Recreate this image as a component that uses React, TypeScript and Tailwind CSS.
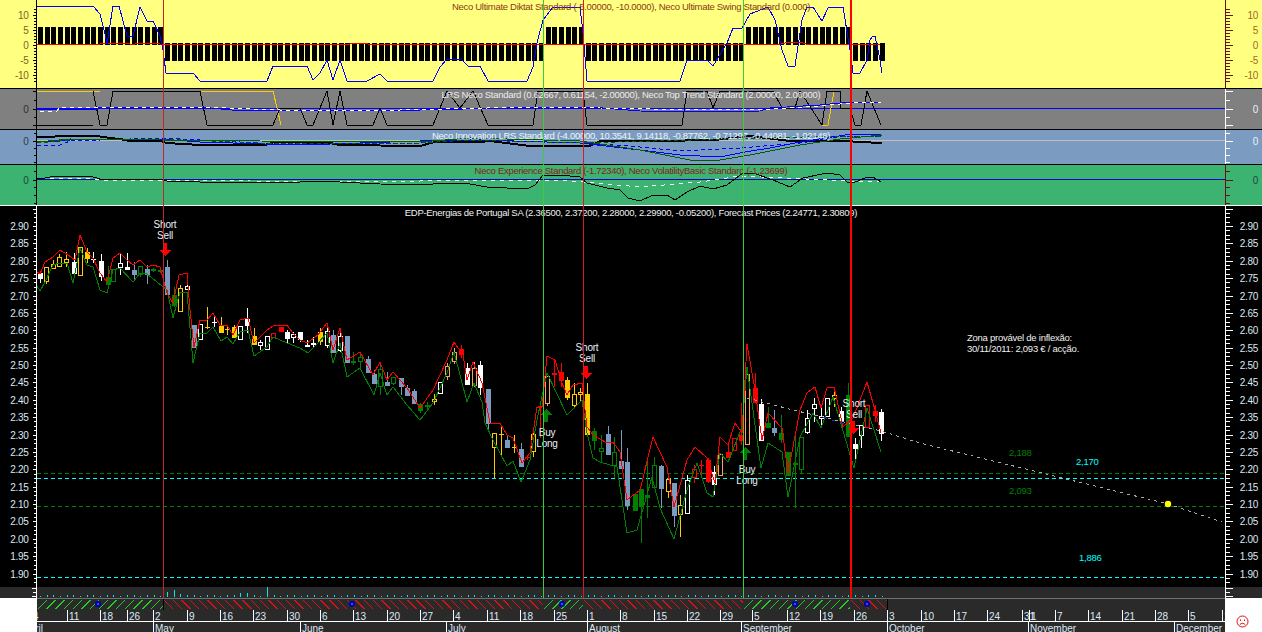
import type { ReactNode } from "react";

type Candle = [number, number, number, number, number, string, number?];
type Tick = { y: number; label?: string; major?: boolean };

const RED = "#ff0000";
const GREEN = "#008000";
const STEEL = "#7b9cc0";
const GOLD = "#ffcc00";
const PEACH = "#f4a460";
const WHITE = "#ffffff";

// x, wick top, body top, body bottom, wick bottom, colour, hollow
const CANDLES: Candle[] = [
  [40, 272, 273, 279, 283, WHITE], [46, 267, 267, 281, 284, GOLD, 1], [53, 260, 264, 268, 269, GOLD, 1],
  [59, 254, 257, 266, 267, GOLD, 1], [66, 252, 259, 262, 267, GOLD, 1], [74, 253, 262, 274, 275, WHITE],
  [80, 247, 247, 275, 275, GOLD, 1], [87, 248, 252, 259, 263, GOLD], [93, 252, 259, 260, 263, WHITE],
  [101, 254, 261, 277, 281, WHITE], [108, 266, 277, 285, 285, GREEN], [113, 269, 269, 281, 281, GREEN, 1],
  [120, 253, 263, 267, 275, WHITE, 1], [127, 253, 267, 270, 270, WHITE], [134, 262, 270, 275, 280, STEEL],
  [140, 266, 266, 274, 277, GREEN, 1], [147, 265, 269, 275, 284, STEEL], [153, 268, 269, 271, 272, GREEN],
  [160, 269, 270, 272, 273, GREEN], [167, 260, 267, 295, 295, STEEL], [174, 287, 295, 306, 307, GREEN],
  [180, 285, 288, 311, 311, GOLD, 1], [187, 282, 286, 289, 289, WHITE, 1], [194, 325, 325, 348, 348, STEEL],
  [200, 324, 324, 339, 340, WHITE, 1], [207, 307, 327, 328, 329, GOLD], [214, 315, 322, 323, 327, WHITE],
  [221, 317, 326, 333, 333, GOLD], [227, 325, 329, 330, 335, GOLD], [234, 325, 327, 338, 338, GOLD],
  [240, 326, 326, 339, 339, WHITE, 1], [247, 308, 319, 326, 333, WHITE], [254, 328, 336, 345, 345, GOLD],
  [260, 340, 342, 345, 350, WHITE, 1], [267, 336, 336, 349, 349, WHITE, 1], [273, 333, 333, 337, 337, RED, 1],
  [281, 327, 327, 332, 332, RED], [287, 330, 332, 339, 344, WHITE], [293, 332, 334, 337, 343, WHITE, 1],
  [300, 332, 332, 340, 342, WHITE], [307, 340, 345, 347, 347, WHITE], [313, 337, 343, 344, 348, WHITE, 1],
  [320, 328, 332, 342, 345, GOLD], [327, 323, 331, 345, 348, WHITE, 1], [333, 330, 335, 353, 353, STEEL],
  [340, 328, 336, 350, 352, WHITE, 1], [347, 336, 336, 363, 363, STEEL], [353, 352, 361, 363, 365, GREEN],
  [360, 352, 357, 361, 370, GREEN, 1], [368, 356, 359, 373, 373, STEEL], [374, 370, 374, 384, 384, STEEL],
  [380, 362, 369, 386, 395, GREEN, 1], [387, 372, 382, 386, 386, STEEL], [393, 377, 377, 383, 385, GREEN, 1],
  [401, 378, 378, 387, 395, STEEL], [407, 385, 388, 396, 396, STEEL], [414, 389, 391, 404, 404, STEEL],
  [420, 403, 404, 411, 413, GREEN], [427, 402, 405, 407, 410, GREEN], [434, 394, 399, 401, 405, GOLD, 1],
  [440, 382, 382, 393, 393, WHITE, 1], [447, 363, 366, 376, 380, PEACH, 1], [454, 348, 352, 361, 364, PEACH, 1],
  [461, 345, 349, 355, 358, RED], [467, 363, 368, 385, 385, WHITE], [474, 362, 368, 385, 387, PEACH, 1],
  [480, 361, 365, 388, 395, WHITE], [488, 389, 389, 424, 432, STEEL], [494, 433, 433, 447, 478, GOLD, 1],
  [501, 426, 434, 435, 457, GOLD], [507, 435, 440, 448, 448, STEEL], [514, 435, 447, 448, 453, GOLD],
  [521, 443, 449, 467, 467, STEEL], [527, 455, 457, 458, 460, RED], [533, 433, 434, 451, 457, GOLD, 1],
  [540, 405, 406, 407, 438, RED], [547, 376, 376, 403, 406, PEACH, 1], [554, 360, 373, 375, 387, RED],
  [561, 363, 372, 381, 387, RED], [567, 377, 380, 398, 400, GOLD], [574, 383, 394, 405, 408, GOLD, 1],
  [580, 388, 392, 394, 402, GOLD, 1], [587, 383, 394, 435, 435, GOLD], [594, 428, 431, 441, 450, GREEN],
  [601, 435, 448, 451, 462, GREEN, 1], [608, 426, 434, 455, 455, STEEL], [614, 437, 452, 465, 478, GREEN, 1],
  [621, 430, 461, 469, 469, STEEL], [627, 448, 462, 506, 510, STEEL], [635, 494, 494, 511, 511, GREEN],
  [641, 489, 489, 506, 543, GREEN], [647, 457, 495, 498, 518, GREEN], [654, 457, 465, 487, 487, GREEN, 1],
  [661, 465, 466, 489, 508, STEEL], [668, 475, 479, 491, 498, GOLD, 1], [674, 483, 483, 516, 527, STEEL],
  [680, 495, 505, 514, 537, GOLD, 1], [687, 475, 480, 513, 513, WHITE, 1], [694, 465, 469, 477, 483, RED, 1],
  [701, 460, 465, 466, 477, RED], [708, 458, 460, 482, 483, RED], [714, 466, 472, 485, 495, WHITE],
  [720, 454, 454, 475, 475, PEACH, 1], [728, 442, 452, 458, 458, RED], [734, 438, 438, 450, 450, RED, 1],
  [741, 403, 435, 441, 445, RED], [747, 374, 374, 444, 444, PEACH, 1], [755, 373, 388, 403, 403, RED],
  [761, 399, 404, 441, 441, WHITE], [768, 407, 423, 428, 428, GREEN], [774, 410, 428, 433, 436, STEEL],
  [781, 415, 433, 440, 443, GREEN], [788, 452, 452, 476, 476, GREEN], [795, 433, 463, 465, 508, GREEN],
  [801, 437, 437, 469, 473, GREEN, 1], [807, 410, 418, 432, 434, WHITE, 1], [814, 398, 404, 408, 422, WHITE, 1],
  [821, 408, 416, 418, 427, WHITE, 1], [827, 398, 398, 416, 416, WHITE, 1], [834, 390, 395, 398, 407, GOLD, 1],
  [841, 407, 411, 421, 427, WHITE], [848, 383, 395, 437, 437, GREEN], [855, 438, 444, 449, 463, WHITE],
  [861, 425, 425, 435, 448, WHITE, 1], [867, 405, 405, 427, 427, RED, 1], [875, 405, 411, 416, 422, RED],
  [881, 409, 412, 434, 441, WHITE],
];

const UPPER_BAND =
  "37,272 40,274 45,262 53,257 60,250 68,255 75,260 80,235 87,252 93,258 100,273 107,282 113,258 120,253 127,260 133,265 140,260 147,267 153,265 160,267 167,293 173,303 179,275 187,273 190,310 194,347 200,320 207,320 213,313 220,325 227,325 233,335 240,320 248,318 254,343 267,330 273,326 287,325 293,333 300,340 307,343 318,335 327,323 333,350 340,328 347,360 360,352 373,375 380,362 387,380 393,372 407,388 420,408 433,390 447,360 454,342 463,355 467,380 473,362 482,383 490,423 500,423 507,435 513,438 522,463 530,453 537,407 542,407 547,356 555,360 562,383 567,395 573,385 582,383 587,427 593,435 607,443 613,442 620,452 627,500 640,490 653,437 667,467 674,507 687,460 695,447 707,458 715,483 720,437 728,445 735,423 742,433 747,344 755,390 762,440 768,413 782,428 788,473 800,410 807,393 815,387 821,408 827,388 834,387 843,427 853,418 867,382 875,410 881,433";
const LOWER_BAND =
  "37,286 40,291 45,282 53,265 60,263 67,263 73,283 80,248 87,265 93,267 100,290 107,293 113,270 120,268 133,282 140,273 147,274 167,290 173,318 180,292 187,292 193,363 200,333 207,333 213,327 221,341 227,337 233,344 240,332 248,330 254,356 267,347 273,337 287,343 300,348 308,353 318,343 327,333 333,363 340,343 347,377 360,368 374,395 380,373 387,395 393,387 407,405 420,420 433,403 447,373 454,352 467,402 474,383 482,402 485,423 493,440 507,466 513,461 521,482 530,460 537,420 547,373 567,415 582,400 587,433 593,458 600,462 617,467 627,533 637,530 652,477 660,508 674,539 687,490 697,463 707,493 713,497 720,453 728,462 742,427 747,367 761,468 768,443 782,452 788,497 800,437 813,413 821,428 833,397 854,468 867,408 881,452";

const DIKTAT_SWING =
  "37,6 93,6 100,14 105,34 107,44 113,6 119,6 127,36 133,36 140,7 147,21 153,21 160,36 163,50 166,73 193,73 200,81 267,81 273,66 307,66 313,80 320,73 327,60 333,80 340,60 347,81 367,81 380,74 387,81 433,81 440,67 447,59 461,59 468,66 480,66 488,81 527,81 533,67 537,43 543,20 553,7 580,7 583,33 587,81 680,81 687,60 707,60 713,66 727,43 733,28 742,28 750,14 768,7 775,20 782,50 788,66 795,66 802,20 807,7 813,7 822,21 828,8 843,7 850,50 853,73 860,73 867,60 870,40 873,36 875,36 880,60 882,73";
const TOP_TREND =
  "93,91 100,125 107,125 113,91 200,91 207,125 273,125 280,108 300,108 307,125 313,125 327,91 333,125 340,91 347,125 373,125 380,108 387,125 420,125 433,125 447,91 460,108 473,91 488,125 533,125 538,91 583,91 587,125 682,125 687,91 707,91 713,108 720,91 773,91 782,108 795,108 800,91 822,125 827,91 840,91 840,108 850,108 855,125 861,125 867,91 881,125";
const INNOVATION_THICK =
  "37,137 50,137 60,136 97,136 110,138 120,139 130,141 160,141 167,143 200,145 265,145 275,142 330,143 340,145 420,146 435,142 480,142 490,141 530,146 545,146 590,146 600,141 680,141 690,140 715,140 750,136 790,141 845,141 860,142 882,143";
const EXPERIENCE =
  "37,179 45,178 55,176 65,177 75,176 90,176 100,179 160,179 167,181 200,182 300,182 320,181 380,184 420,185 433,184 453,183 470,184 487,187 507,188 527,189 535,185 543,175 560,175 580,177 587,183 607,188 620,190 628,198 640,201 653,195 667,195 675,200 687,192 700,186 713,189 727,185 743,173 753,173 773,180 790,187 803,178 827,173 840,175 847,182 853,183 865,178 873,177 881,182";

const GRAY_TICKS: Tick[] = [{ y: 91, major: true }, { y: 100 }, { y: 108.5, label: "0", major: true }, { y: 117 }, { y: 125, major: true }];
const BLUE_TICKS: Tick[] = [{ y: 133 }, { y: 141, label: "0", major: true }, { y: 148 }, { y: 155 }, { y: 162 }];
const GREEN_TICKS: Tick[] = [{ y: 171 }, { y: 179.5, label: "0", major: true }, { y: 187 }, { y: 195 }, { y: 203 }];

function yellowTicks(): Tick[] {
  const ticks: Tick[] = [];
  const labels = ["10", "5", "0", "-5", "-10"];
  for (let i = -2; i < 23; i++) {
    const major = i >= 0 && i % 5 === 0 && i / 5 < 5;
    ticks.push({ y: 14.5 + i * 3, major, label: major ? labels[i / 5] : undefined });
  }
  return ticks;
}

function priceTicks(): Tick[] {
  const ticks: Tick[] = [];
  for (let i = -4; i <= 21; i++) {
    const y = 226 + i * 17.375;
    const value = 2.9 - i * 0.05;
    const inRange = i >= 0 && i <= 20;
    ticks.push({ y, major: true, label: inRange ? value.toFixed(2) : undefined });
    ticks.push({ y: y + 4.3 }, { y: y + 8.7 }, { y: y + 13 });
  }
  return ticks.filter((t) => t.y > 206 && t.y < 587);
}

function Axis({ side, top, height, line, label, ticks }: { side: "left" | "right"; top: number; height: number; line: string; label: string; ticks: Tick[] }) {
  const left = side === "left";
  const axisX = left ? 36.5 : 0.5;
  return (
    <svg width={37} height={height} viewBox={`0 ${top} 37 ${height}`} className="block text-[10px] tracking-[-0.3px]" shapeRendering="crispEdges">
      <line x1={axisX} x2={axisX} y1={top} y2={top + height} stroke={line} />
      {ticks.map((t, i) => (
        <g key={i}>
          <line
            x1={axisX}
            x2={left ? axisX - (t.major ? 4 : 3) : axisX + (t.major ? 7 : 4)}
            y1={Math.round(t.y) + 0.5}
            y2={Math.round(t.y) + 0.5}
            stroke={line}
          />
          {t.label && (
            <text x={left ? 28.5 : 33} y={t.y + 4} textAnchor="end" fill={label} shapeRendering="auto">
              {t.label}
            </text>
          )}
        </g>
      ))}
    </svg>
  );
}

function Plot({ top, height, children }: { top: number; height: number; children: ReactNode }) {
  return (
    <svg width={1188} height={height} viewBox={`37 ${top} 1188 ${height}`} className="block" fill="none" shapeRendering="crispEdges">
      {children}
    </svg>
  );
}

function Title({ className, children }: { className: string; children: ReactNode }) {
  return <div className={`absolute inset-x-0 text-center text-[9.5px] leading-3 tracking-[-0.3px] whitespace-nowrap ${className}`}>{children}</div>;
}

function UltimateBars() {
  const bars = [];
  for (let i = 0; i < 127; i++) {
    const x = 40 + i * 6.68;
    const up = x < 163 || (x > 543 && x < 583) || (x > 743 && x < 850);
    bars.push(<rect key={i} x={Math.round(x) - 2} y={up ? 27 : 43} width={5} height={18} fill="#000" />);
  }
  return <>{bars}</>;
}

function CandleMark({ c }: { c: Candle }) {
  const [x, wickTop, bodyTop, bodyBottom, wickBottom, color, hollow] = c;
  return (
    <g>
      <line x1={x + 0.5} x2={x + 0.5} y1={wickTop} y2={wickBottom} stroke={color} />
      {hollow ? (
        <rect x={x - 1.5} y={bodyTop + 0.5} width={4} height={bodyBottom - bodyTop} fill="#000" stroke={color} />
      ) : (
        <rect x={x - 2} y={bodyTop} width={5} height={Math.max(bodyBottom - bodyTop, 1)} fill={color} />
      )}
    </g>
  );
}

function Signal({ x, y, lines }: { x: number; y: number; lines: [string, string] }) {
  return (
    <g fontSize={10} letterSpacing={-0.2} fill="#e8f0f8" textAnchor="middle" shapeRendering="auto">
      <text x={x} y={y}>{lines[0]}</text>
      <text x={x} y={y + 11}>{lines[1]}</text>
    </g>
  );
}

function SellArrow({ x, y }: { x: number; y: number }) {
  return <path d={`M${x - 2} ${y}h4v7h4l-6 6 -6-6h4z`} fill={RED} />;
}

function BuyArrow({ x, y }: { x: number; y: number }) {
  return <path d={`M${x - 2} ${y + 13}h4v-7h4l-6-6 -6 6h4z`} fill="#008000" />;
}

function PriceChart() {
  return (
    <Plot top={206} height={381}>
      <line x1={37} x2={1225} y1={473.5} y2={473.5} stroke={GREEN} strokeDasharray="4 3" />
      <line x1={37} x2={1225} y1={478.5} y2={478.5} stroke="#00ffff" strokeDasharray="4 3" />
      <line x1={37} x2={1225} y1={506.5} y2={506.5} stroke={GREEN} strokeDasharray="4 3" />
      <line x1={37} x2={1225} y1={577.5} y2={577.5} stroke="#00ffff" strokeDasharray="4 3" />
      {CANDLES.map((c, i) => (
        <CandleMark key={i} c={c} />
      ))}
      <polyline points={LOWER_BAND} stroke={GREEN} />
      <polyline points={UPPER_BAND} stroke={RED} />
      <polyline points="747,398 793,410 827,418 881,431 920,443 1168,504 1222,522" stroke="#a8a8a8" strokeDasharray="3 4" />
      <polyline points="823,417 850,426" stroke="#2030d0" strokeDasharray="4 5" />
      <circle cx={1168} cy={504} r={3.2} fill="#ffff00" shapeRendering="auto" />
      <SellArrow x={165} y={243} />
      <SellArrow x={586} y={366} />
      <SellArrow x={853} y={421} />
      <BuyArrow x={546} y={409} />
      <BuyArrow x={745} y={447} />
      <Signal x={165} y={228} lines={["Short", "Sell"]} />
      <Signal x={587} y={351} lines={["Short", "Sell"]} />
      <Signal x={854} y={407} lines={["Short", "Sell"]} />
      <Signal x={547} y={436} lines={["Buy", "Long"]} />
      <Signal x={747} y={473} lines={["Buy", "Long"]} />
      <g fontSize={9.5} letterSpacing={-0.25} shapeRendering="auto">
        <text x={967} y={341} fill="#f0f0f0">Zona provável de inflexão:</text>
        <text x={967} y={352} fill="#f0f0f0">30/11/2011: 2,093 € / acção.</text>
        <text x={1009} y={456} fill={GREEN}>2,188</text>
        <text x={1076} y={465} fill="#00ffff">2,170</text>
        <text x={1009} y={494} fill={GREEN}>2,093</text>
        <text x={1079} y={561} fill="#00ffff">1,886</text>
      </g>
    </Plot>
  );
}

function VolumeStrip() {
  const big: Record<number, number> = { 19: 5, 20: 7, 21: 3, 30: 4, 31: 4, 34: 10 };
  const ticks = [];
  for (let i = 0; i < 127; i++) {
    const x = Math.round(40 + i * 6.68);
    const h = big[i] ?? (i % 3 === 0 ? 1 : 2);
    ticks.push(<line key={i} x1={x + 0.5} x2={x + 0.5} y1={597 - h} y2={597} stroke="#00e8e8" />);
  }
  return (
    <svg width={1188} height={11} viewBox="37 587 1188 11" className="block" shapeRendering="crispEdges">
      {ticks}
    </svg>
  );
}

const ZONES: [number, number, string, number][] = [
  [37, 163, "#22cc22", 1],
  [163, 543, "#e01010", -1],
  [543, 583, "#22cc22", 1],
  [583, 743, "#e01010", -1],
  [743, 850, "#22cc22", 1],
  [850, 887, "#e01010", -1],
];

const DAY_TICKS: [number, string][] = [
  [31, "4"], [67, "11"], [100, "18"], [127, "26"], [153, "2"], [187, "9"], [220, "16"], [253, "23"], [287, "30"],
  [320, "6"], [353, "13"], [387, "20"], [420, "27"], [453, "4"], [487, "11"], [520, "18"], [554, "25"], [587, "1"],
  [620, "8"], [654, "15"], [687, "22"], [720, "29"], [752, "5"], [787, "12"], [820, "19"], [854, "26"], [887, "3"],
  [921, "10"], [954, "17"], [987, "24"], [1022, "31"], [1029, "1"], [1055, "7"], [1088, "14"], [1122, "21"], [1155, "28"],
  [1188, "5"], [1222, "12"],
];

const MONTH_TICKS: [number, string][] = [
  [21, "April"], [153, "May"], [300, "June"], [446, "July"], [587, "August"], [741, "September"], [887, "October"], [1028, "November"], [1174, "December"],
];

function TimeAxis() {
  const hatches = [];
  for (const [from, to, color, dir] of ZONES) {
    for (let x = from + 1; x < to; x += 8.7) {
      const end = Math.min(x + 9, to);
      const span = end - x;
      hatches.push(
        <line key={`${from}-${x}`} x1={x} y1={dir > 0 ? 609 : 600} x2={end} y2={dir > 0 ? 609 - span : 600 + span} stroke={color} />,
      );
    }
  }
  return (
    <svg width={1188} height={34} viewBox="37 598 1188 34" className="block" shapeRendering="crispEdges">
      <rect x={37} y={598} width={1188} height={34} fill="#2a2a2a" />
      <line x1={37} x2={1225} y1={598.5} y2={598.5} stroke="#707070" />
      {hatches}
      {[163, 887].map((x) => (
        <line key={x} x1={x + 0.5} x2={x + 0.5} y1={599} y2={610} stroke="#000" />
      ))}
      {[98, 352, 562, 795, 867].map((x) => (
        <g key={x} shapeRendering="auto">
          <circle cx={x} cy={604} r={3} fill="#0000b0" />
          <circle cx={x} cy={604} r={1.2} fill="#3050e0" />
        </g>
      ))}
      <line x1={37} x2={1225} y1={621.5} y2={621.5} stroke="#fff" />
      {DAY_TICKS.map(([x, label], i) => (
        <g key={i}>
          <line x1={x + 0.5} x2={x + 0.5} y1={610} y2={621} stroke="#fff" />
          <text x={x + 2} y={620} fontSize={10} fill="#dce8f4" shapeRendering="auto">{label}</text>
        </g>
      ))}
      {MONTH_TICKS.map(([x, label]) => (
        <g key={label}>
          <line x1={x + 0.5} x2={x + 0.5} y1={622} y2={632} stroke="#fff" />
          <text x={x + 2} y={632} fontSize={10} fill="#dce8f4" shapeRendering="auto">{label}</text>
        </g>
      ))}
    </svg>
  );
}

const VERTICALS = [
  "left-[163px] w-px bg-[#c02828]",
  "left-[543px] w-px bg-[#3ccc3c]",
  "left-[583px] w-px bg-[#d81c1c]",
  "left-[743px] w-px bg-[#3ccc3c]",
  "left-[850px] w-[2px] bg-[#ff0000]",
];

export default function App() {
  return (
    <div className="relative h-[632px] w-[1262px] overflow-hidden bg-white font-['Liberation_Sans',Arial,sans-serif]">
      <div className="grid h-[88px] grid-cols-[37px_1188px_37px] bg-[#ffff80]">
        <Axis side="left" top={0} height={88} line="#000000" label="#7a6420" ticks={yellowTicks()} />
        <div className="relative">
          <Plot top={0} height={88}>
            <UltimateBars />
            <polyline points="37,44 100,44 106,43 130,44 135,44 150,43 160,44 163,44 350,44 355,43 362,43 368,44 600,44 780,44 790,42 800,42 806,44 848,44 860,44 870,45 880,44" stroke={RED} />
            <polyline points={DIKTAT_SWING} stroke="#0000ff" />
          </Plot>
          <Title className="top-[1px] text-[#8a3a10]">Neco Ultimate Diktat Standard (-5.00000, -10.0000), Neco Ultimate Swing Standard (0.000)</Title>
        </div>
        <Axis side="right" top={0} height={88} line="#6b1010" label="#a06a20" ticks={yellowTicks()} />
      </div>

      <div className="grid h-[41px] grid-cols-[37px_1188px_37px] border-t border-black bg-[#808080]">
        <Axis side="left" top={89} height={40} line="#000000" label="#303030" ticks={GRAY_TICKS} />
        <div className="relative">
          <Plot top={89} height={40}>
            <line x1={37} x2={1225} y1={108.5} y2={108.5} stroke="#0000ff" />
            <polyline points="37,91 100,91" stroke={GOLD} />
            <polyline points="200,91 273,91 281,125" stroke={GOLD} />
            <polyline points="822,125 828,125 834,91 840,91" stroke={GOLD} />
            <polyline points="37,125 93,125" stroke="#000" />
            <polyline points={TOP_TREND} stroke="#000" />
            <polyline points="37,109 97,109 97,107 200,107 232,110 420,110 550,107 590,107 640,111 720,112 760,111 770,108 820,105 850,102 881,102" stroke="#0000ff" />
            <polyline points="40,111 57,111 60,107 200,107 280,110 400,110 530,107 600,108 700,110 770,109 820,106 850,103 881,102" stroke="#ffffff" strokeDasharray="4 4" />
          </Plot>
          <Title className="top-0 text-[#ececec]">LRS Neco Standard (0.62667, 0.61154, -2.00000), Neco Top Trend Standard (2.00000, 2.00000)</Title>
        </div>
        <Axis side="right" top={89} height={40} line="#ffffff" label="#e8f0f8" ticks={GRAY_TICKS} />
      </div>

      <div className="grid h-[35px] grid-cols-[37px_1188px_37px] border-t border-black bg-[#7b9cc0]">
        <Axis side="left" top={130} height={34} line="#000000" label="#304040" ticks={BLUE_TICKS} />
        <div className="relative">
          <Plot top={130} height={34}>
            <line x1={37} x2={1225} y1={140.5} y2={140.5} stroke="#c0c0c0" />
            <polyline points={INNOVATION_THICK} stroke="#000" strokeWidth={2} />
            <polyline points="37,141 60,141 80,139 160,139 200,142 265,144 330,144 420,141 480,140 580,143 640,150 680,155 720,157 745,152 770,148 800,142 845,135 882,134" stroke="#0000ff" />
            <polyline points="37,145 60,145 70,141 160,138 260,143 420,143 470,140 580,143 630,146 680,151 740,148 800,143 840,137 882,136" stroke="#0000ff" strokeDasharray="4 3" />
            <polyline points="37,142 70,139 160,140 260,141 420,142 470,138 580,141 640,150 690,160 720,160 750,155 800,145 840,139 882,135" stroke="#006000" />
            <polyline points="37,143 70,140 160,139 260,143 420,143 470,140 580,143 840,136 882,136" stroke="#006000" strokeDasharray="4 3" />
          </Plot>
          <Title className="top-0 text-[#f0f4f8]">Neco Innovation LRS Standard (-4.00000, 10.3541, 9.14118, -0.87762, -0.71297, -0.44081, -1.02148)</Title>
        </div>
        <Axis side="right" top={130} height={34} line="#ffffff" label="#e8f0f8" ticks={BLUE_TICKS} />
      </div>

      <div className="grid h-[41px] grid-cols-[37px_1188px_37px] border-t border-black bg-[#3cb371]">
        <Axis side="left" top={165} height={40} line="#000000" label="#204838" ticks={GREEN_TICKS} />
        <div className="relative">
          <Plot top={165} height={40}>
            <line x1={37} x2={1225} y1={179.5} y2={179.5} stroke="#0000c0" />
            <polyline points="50,179 80,178 100,180 180,180 250,181 420,181 480,180 560,180 640,187 700,182 740,176 850,181 881,181" stroke="#ffffff" strokeDasharray="4 5" />
            <polyline points={EXPERIENCE} stroke="#000" />
          </Plot>
          <Title className="top-0 text-[#8b1a1a]">Neco Experience Standard (-1.72340), Neco VolatilityBasic Standard (-1.23699)</Title>
        </div>
        <Axis side="right" top={165} height={40} line="#6b1010" label="#204838" ticks={GREEN_TICKS} />
      </div>

      <div className="grid h-[382px] grid-cols-[37px_1188px_37px] border-t border-white bg-black">
        <Axis side="left" top={206} height={381} line="#ffffff" label="#dce8f4" ticks={priceTicks()} />
        <div className="relative">
          <PriceChart />
          <Title className="top-[1px] text-[#f0f0f0]">EDP-Energias de Portugal SA (2.36500, 2.37200, 2.28000, 2.29900, -0.05200), Forecast Prices (2.24771, 2.30809)</Title>
        </div>
        <Axis side="right" top={206} height={381} line="#ffffff" label="#dce8f4" ticks={priceTicks()} />
      </div>

      <div className="grid h-[11px] grid-cols-[37px_1188px_37px] bg-[#2a2a2a]">
        <div className="flex flex-col items-end gap-[3px] border-r border-white pt-[1px]">
          <span className="h-px w-[4px] bg-white" />
          <span className="h-px w-[3px] bg-white" />
          <span className="h-px w-[4px] bg-white" />
        </div>
        <VolumeStrip />
        <div className="flex flex-col items-start gap-[3px] border-l border-white pt-[1px]">
          <span className="h-px w-[7px] bg-white" />
          <span className="h-px w-[4px] bg-white" />
          <span className="h-px w-[7px] bg-white" />
        </div>
      </div>

      <div className="grid h-[34px] grid-cols-[37px_1188px_37px] bg-white">
        <div />
        <TimeAxis />
        <div className="flex items-end justify-center pb-[4px] pr-[2px]">
          <svg width={13} height={13} viewBox="0 0 13 13" fill="none" stroke="#e01010">
            <circle cx={6.5} cy={6.5} r={5.5} />
            <path d="M3.8 9.6c1.4-1.6 4-1.6 5.4 0" />
            <path d="M4.5 4.5v1.5M8.5 4.5v1.5" />
          </svg>
        </div>
      </div>

      {VERTICALS.map((v) => (
        <div key={v} className={`absolute top-0 h-[598px] ${v}`} />
      ))}
    </div>
  );
}
